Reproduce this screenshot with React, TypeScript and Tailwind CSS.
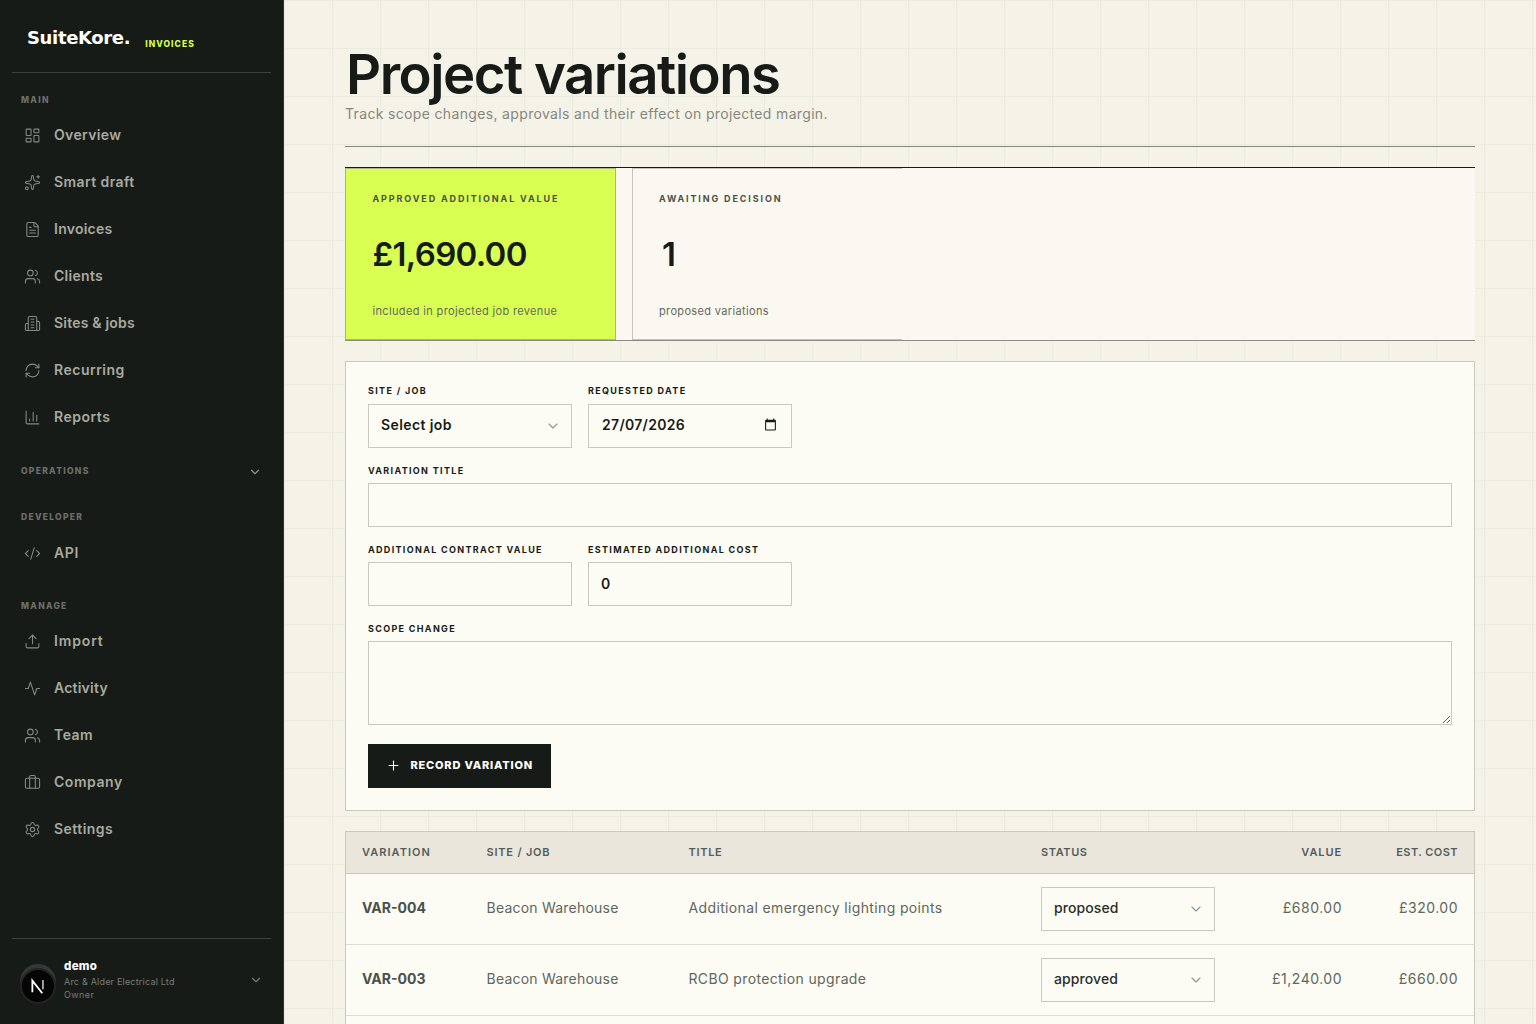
import React from 'react';
import {
  Briefcase,
  ChartColumn,
  ChevronDown,
  CodeXml,
  FileText,
  LayoutDashboard,
  Plus,
  RefreshCw,
  Settings,
  Sparkles,
  Upload,
  Users,
} from 'lucide-react';

interface NavItem {
  label: string;
  icon: React.ElementType;
  tracking: string;
}

interface Variation {
  ref: string;
  job: string;
  title: string;
  status: string;
  value: string;
  cost: string;
}

function ActivityLine(props: React.SVGProps<SVGSVGElement>) {
  return (
    <svg viewBox="0 0 24 24" fill="none" stroke="currentColor" strokeLinecap="round" strokeLinejoin="round" {...props}>
      <polyline points="22 12 18 12 15 21 9 3 6 12 2 12" />
    </svg>
  );
}

function BuildingIcon(props: React.SVGProps<SVGSVGElement>) {
  return (
    <svg viewBox="0 0 24 24" fill="none" stroke="currentColor" strokeLinecap="round" strokeLinejoin="round" {...props}>
      <path d="M6 22V4a2 2 0 0 1 2-2h8a2 2 0 0 1 2 2v18Z" />
      <path d="M6 12H4a2 2 0 0 0-2 2v6a2 2 0 0 0 2 2h2" />
      <path d="M18 9h2a2 2 0 0 1 2 2v9a2 2 0 0 1-2 2h-2" />
      <path d="M10 6h4M10 10h4M10 14h4M10 18h4" />
    </svg>
  );
}

const mainNav: NavItem[] = [
  { label: 'Overview', icon: LayoutDashboard, tracking: 'tracking-[0.36px]' },
  { label: 'Smart draft', icon: Sparkles, tracking: 'tracking-[0.42px]' },
  { label: 'Invoices', icon: FileText, tracking: 'tracking-[0.25px]' },
  { label: 'Clients', icon: Users, tracking: 'tracking-[0.3px]' },
  { label: 'Sites & jobs', icon: BuildingIcon, tracking: 'tracking-[0.2px]' },
  { label: 'Recurring', icon: RefreshCw, tracking: 'tracking-[0.5px]' },
  { label: 'Reports', icon: ChartColumn, tracking: 'tracking-[0.5px]' },
];

const developerNav: NavItem[] = [{ label: 'API', icon: CodeXml, tracking: 'tracking-[0.6px]' }];

const manageNav: NavItem[] = [
  { label: 'Import', icon: Upload, tracking: 'tracking-[0.85px]' },
  { label: 'Activity', icon: ActivityLine, tracking: 'tracking-[0.22px]' },
  { label: 'Team', icon: Users, tracking: 'tracking-[0.5px]' },
  { label: 'Company', icon: Briefcase, tracking: 'tracking-[0.55px]' },
  { label: 'Settings', icon: Settings, tracking: 'tracking-[0.45px]' },
];

const variations: Variation[] = [
  {
    ref: 'VAR-004',
    job: 'Beacon Warehouse',
    title: 'Additional emergency lighting points',
    status: 'proposed',
    value: '£680.00',
    cost: '£320.00',
  },
  {
    ref: 'VAR-003',
    job: 'Beacon Warehouse',
    title: 'RCBO protection upgrade',
    status: 'approved',
    value: '£1,240.00',
    cost: '£660.00',
  },
];

function NavList({ items }: { items: NavItem[] }) {
  return (
    <ul>
      {items.map(({ label, icon: Icon, tracking }) => (
        <li key={label} className="flex h-[47px] items-center gap-[13px] pl-6">
          <Icon className="size-[17px] shrink-0 text-[#868a82]" strokeWidth={1.5} />
          <span className={`pb-[2px] text-[14px] font-semibold text-[#a8aaa0] ${tracking}`}>{label}</span>
        </li>
      ))}
    </ul>
  );
}

function NavHeading({ children }: { children: React.ReactNode }) {
  return (
    <div className="flex h-[14px] items-center justify-between pr-[21px] pl-[21px] text-[8.5px] font-extrabold tracking-[1.3px] text-[#6c706a]">
      {children}
    </div>
  );
}

function Sidebar() {
  return (
    <aside className="flex h-full w-[284px] shrink-0 flex-col border-r border-[#30332a] bg-[#171b17]">
      <div className="mr-3 ml-3 flex h-[73px] items-start border-b border-[#3d413c] pt-[26px] pl-[15px]">
        <span className="font-['DejaVu_Sans'] text-[18px] leading-[23px] font-bold tracking-[-0.35px] text-white">
          SuiteKore.
        </span>
        <span className="mt-[11px] ml-[15px] text-[8.5px] leading-[14px] font-extrabold tracking-[1.05px] text-[#d5ff4f]">
          INVOICES
        </span>
      </div>

      <nav>
        <div className="mt-5 mb-[5px]">
          <NavHeading>MAIN</NavHeading>
        </div>
        <NavList items={mainNav} />
        <div className="mt-[23px]">
          <NavHeading>
            OPERATIONS
            <ChevronDown className="mt-px size-[14px] text-[#8f928b]" strokeWidth={2} />
          </NavHeading>
        </div>
        <div className="mt-8 mb-[6px]">
          <NavHeading>DEVELOPER</NavHeading>
        </div>
        <NavList items={developerNav} />
        <div className="mt-[22px] mb-[5px]">
          <NavHeading>MANAGE</NavHeading>
        </div>
        <NavList items={manageNav} />
      </nav>

      <div className="mx-3 mt-auto flex h-[86px] items-start border-t border-[#3d413c] pl-2">
        <div className="relative mt-[25px] size-9 shrink-0 rounded-full bg-[#353835]">
          <div className="absolute top-[4px] left-0 flex size-9 items-center justify-center rounded-full border-2 border-[#222422] bg-[#050505]">
            <svg viewBox="0 0 16 16" className="size-[18px]" fill="none">
              <path d="M3 13.6V3.2L11.8 14.4" stroke="white" strokeWidth="1.6" />
              <path d="M12.4 2.6v8.2" stroke="#b9b9b9" strokeWidth="1.5" />
            </svg>
          </div>
        </div>
        <div className="mt-5 ml-2 flex-1">
          <p className="text-[11.5px] leading-[14px] font-extrabold tracking-[0.3px] text-white">demo</p>
          <p className="mt-0.5 text-[9px] leading-[13px] tracking-[0.2px] text-[#777b75]">Arc &amp; Alder Electrical Ltd</p>
          <p className="text-[9px] leading-[13px] tracking-[0.4px] text-[#777b75]">Owner</p>
        </div>
        <ChevronDown className="mt-[34px] mr-2 size-[14px] text-[#777b75]" />
      </div>
    </aside>
  );
}

function StatCard({ label, value, note, accent }: { label: string; value: string; note: string; accent?: boolean }) {
  return (
    <div
      className={
        accent
          ? 'h-full border border-[#a9b57c] bg-[#d8ff52] pt-[23px] pl-[26.5px]'
          : 'h-full border-y border-l border-[#c6c5bd] pt-[23px] pl-[26.5px]'
      }
    >
      <p className="text-[9px] leading-[14px] font-bold tracking-[1.87px] text-[#4b5148]">{label}</p>
      <p
        className={`mt-[28px] text-[33px] leading-10 font-semibold tracking-[-0.7px] text-[#171b17] ${accent ? '' : 'pl-[3px]'}`}
      >
        {value}
      </p>
      <p className="mt-[29px] text-[11px] leading-4 tracking-[0.35px] text-[#66695f]">{note}</p>
    </div>
  );
}

function Field({ label, className = '', children }: { label: string; className?: string; children: React.ReactNode }) {
  return (
    <label className={`block ${className}`}>
      <span className="mb-[6px] block text-[9px] leading-[13px] font-bold tracking-[1.32px] text-[#171b17]">{label}</span>
      {children}
    </label>
  );
}

function CalendarIcon() {
  return (
    <svg viewBox="0 0 24 24" className="size-[13px]" fill="#171b17">
      <path d="M20 3h-1V1h-2v2H7V1H5v2H4c-1.1 0-2 .9-2 2v16c0 1.1.9 2 2 2h16c1.1 0 2-.9 2-2V5c0-1.1-.9-2-2-2zm0 18H4V8h16v13z" />
    </svg>
  );
}

function VariationForm() {
  return (
    <section className="mt-5 border border-[#c8c9bf] bg-[#fcfcf4] px-[22px] pt-[22px] pb-[22px]">
      <div className="grid grid-cols-5 gap-4">
        <Field label="SITE / JOB">
          <span className="mt-[7px] flex h-11 items-center justify-between border border-[#c8c9c2] pr-[10px] pb-[3px] pl-3 text-[14px] font-semibold tracking-[0.4px] text-[#171b17]">
            Select job
            <ChevronDown className="mt-[3px] size-4 text-[#90989c]" strokeWidth={1.75} />
          </span>
        </Field>
        <Field label="REQUESTED DATE">
          <span className="mt-[7px] flex h-11 items-center justify-between border border-[#c8c9c2] pr-[14px] pb-[3px] pl-[13px] text-[14px] font-semibold tracking-[0.3px] text-[#171b17]">
            27/07/2026
            <CalendarIcon />
          </span>
        </Field>
        <Field label="VARIATION TITLE" className="col-span-5">
          <input className="block h-11 w-full border border-[#c8c9c2] px-3" />
        </Field>
        <Field label="ADDITIONAL CONTRACT VALUE">
          <input className="block h-11 w-full border border-[#c8c9c2] px-3" />
        </Field>
        <Field label="ESTIMATED ADDITIONAL COST">
          <input
            className="block h-11 w-full border border-[#c8c9c2] px-3 pb-px text-[14px] font-semibold text-[#171b17]"
            defaultValue="0"
          />
        </Field>
        <Field label="SCOPE CHANGE" className="col-span-5">
          <textarea className="block h-[84px] w-full resize border border-[#c8c9c2] px-3" />
        </Field>
      </div>
      <button className="mt-[19px] flex h-11 w-[183px] items-center bg-[#171b17] pb-px pl-[18px] text-[11px] font-extrabold tracking-[0.8px] text-white">
        <Plus className="mr-[9.5px] size-[15px]" strokeWidth={1.75} />
        RECORD VARIATION
      </button>
    </section>
  );
}

function VariationTable() {
  return (
    <section className="mt-5 flex-1 border-x border-t border-[#c8c9bf] bg-[#fcfcf4]">
      <table className="w-full table-fixed border-separate border-spacing-0 text-left">
        <colgroup>
          <col className="w-[124.5px]" />
          <col className="w-[202px]" />
          <col className="w-[352.5px]" />
          <col className="w-[206px]" />
          <col className="w-[127px]" />
          <col className="w-[116px]" />
        </colgroup>
        <thead>
          <tr className="h-[42px] bg-[#eae6db] text-[11px] text-[#555d5c] *:border-b *:border-[#c8c9bf] *:px-4 *:font-semibold">
            <th className="tracking-[1.05px]">VARIATION</th>
            <th className="tracking-[0.8px]">SITE / JOB</th>
            <th className="tracking-[0.7px]">TITLE</th>
            <th className="tracking-[0.6px]">STATUS</th>
            <th className="text-right tracking-[0.9px]">VALUE</th>
            <th className="text-right tracking-[0.45px]">EST. COST</th>
          </tr>
        </thead>
        <tbody>
          {variations.map((v) => (
            <tr
              key={v.ref}
              className="h-[71px] text-[14px] text-[#61665f] *:border-b *:border-[#dbdcd4] *:px-4 *:pt-0 *:pb-[3px]"
            >
              <td className="font-bold text-[#4a514a]">{v.ref}</td>
              <td className="tracking-[0.22px]">{v.job}</td>
              <td className="tracking-[0.36px]">{v.title}</td>
              <td>
                <span className="mt-[3px] flex h-11 items-center justify-between border border-[#c8c9c2] pr-[10px] pb-[3px] pl-3 font-medium tracking-[0.1px] text-[#2a2e2a]">
                  {v.status}
                  <ChevronDown className="mt-[3px] size-4 text-[#90989c]" strokeWidth={1.75} />
                </span>
              </td>
              <td className="text-right tracking-[0.5px]">{v.value}</td>
              <td className="text-right tracking-[0.5px]">{v.cost}</td>
            </tr>
          ))}
        </tbody>
      </table>
    </section>
  );
}

export default function App() {
  return (
    <div className="flex h-screen overflow-hidden bg-[#f5f2e7] font-['Inter',sans-serif]">
      <Sidebar />
      <main className="flex min-w-0 flex-1 flex-col bg-[linear-gradient(to_right,#ecebe0_1px,transparent_1px),linear-gradient(to_bottom,#ecebe0_1px,transparent_1px)] bg-[size:48px_48px] px-[61px]">
        <header className="h-[147px] border-b border-[#85867c] pt-[44px]">
          <h1 className="pl-px text-[54.5px] leading-[60px] font-semibold tracking-[-1.5px] text-[#171b17]">
            Project variations
          </h1>
          <p className="text-[14px] leading-5 tracking-[0.34px] text-[#85887f]">
            Track scope changes, approvals and their effect on projected margin.
          </p>
        </header>

        <section className="mt-5 grid h-[174px] grid-cols-4 gap-4 border-t border-b border-t-[#171b17] border-b-[#8b8c83] bg-[#fbf8f1]">
          <StatCard label="APPROVED ADDITIONAL VALUE" value="£1,690.00" note="included in projected job revenue" accent />
          <StatCard label="AWAITING DECISION" value="1" note="proposed variations" />
        </section>

        <VariationForm />
        <VariationTable />
      </main>
    </div>
  );
}
